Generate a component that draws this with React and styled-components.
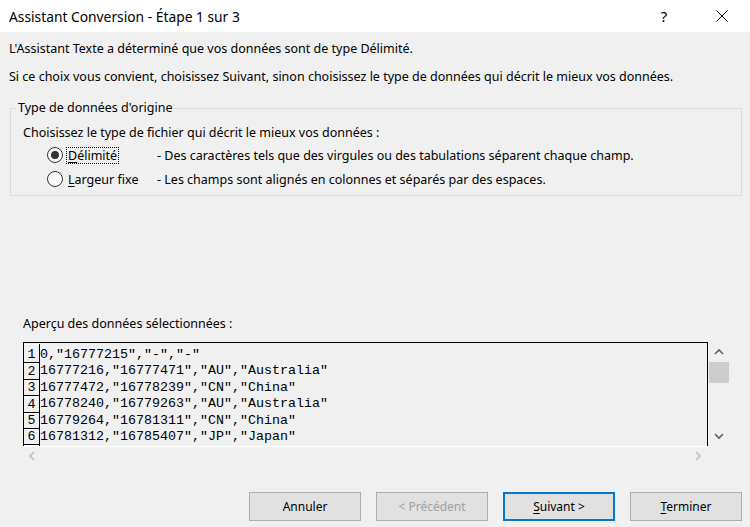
import React from "react";
import styled, { createGlobalStyle } from "styled-components";

const Global = createGlobalStyle`
  html, body { margin: 0; padding: 0; background: #f0f0f0; }
  body { font-family: "Noto Sans", "DejaVu Sans", sans-serif; font-size: 12.5px; color: #000; }
`;

const Window = styled.div`
  width: 750px;
  height: 527px;
  display: flex;
  flex-direction: column;
  background: #f0f0f0;
  overflow: hidden;
`;

const TitleBar = styled.div`
  height: 32px;
  flex: none;
  background: #fff;
  display: flex;
  align-items: center;
  padding-left: 9px;
`;

const Title = styled.div`
  flex: 1;
  font-size: 13.8px;
  color: #000;
`;

const TitleButton = styled.div`
  width: ${(p) => p.$w}px;
  height: 32px;
  display: flex;
  align-items: center;
  justify-content: center;
  font-size: 15px;
  color: #000;
`;

const Body = styled.div`
  flex: 1;
  display: flex;
  flex-direction: column;
  padding: 9px 8px 0 9px;
`;

const Para = styled.div`
  line-height: 16px;
  margin-top: ${(p) => p.$mt || 0}px;
`;

const Group = styled.fieldset`
  margin: 15px 0 0 1px;
  padding: 0 0 4px 5px;
  border: 1px solid #dcdcdc;
  min-width: 0;
`;

const Legend = styled.legend`
  padding: 0 2px;
  line-height: 16px;
`;

const GroupInner = styled.div`
  padding-left: 7px;
  display: flex;
  flex-direction: column;
`;

const Prompt = styled.div`
  line-height: 16px;
  margin-top: 9px;
  margin-bottom: 2px;
`;

const OptionRow = styled.div`
  display: grid;
  grid-template-columns: 20px 90px 1fr;
  align-items: center;
  height: 24px;
  padding-left: 24px;
`;

const Radio = styled.span`
  width: 14px;
  height: 14px;
  border: 1px solid #333;
  border-radius: 50%;
  background: #fff;
  display: flex;
  align-items: center;
  justify-content: center;
  box-sizing: content-box;
  &::after {
    content: "";
    width: 8px;
    height: 8px;
    border-radius: 50%;
    background: ${(p) => (p.$checked ? "#333" : "transparent")};
  }
`;

const OptionLabel = styled.span`
  justify-self: start;
  padding: 0 1px;
  line-height: 15px;
  outline: ${(p) => (p.$focus ? "1px dotted #000" : "none")};
  outline-offset: 0;
`;

const Key = styled.span`
  text-decoration: underline;
  text-underline-offset: 2px;
`;

const PreviewLabel = styled.div`
  margin: 120px 0 0 14px;
  line-height: 16px;
`;

const Preview = styled.div`
  margin: 10px 13px 0 14px;
  height: 122px;
  display: grid;
  grid-template-columns: 1fr 21px;
  grid-template-rows: 1fr 18px;
`;

const TextBox = styled.div`
  border: 1px solid #000;
  border-bottom: none;
  padding-top: 1px;
  overflow: hidden;
  display: grid;
  grid-template-columns: 16px 1fr;
`;

const NumCol = styled.div`
  border-right: 1px solid #000;
  display: flex;
  flex-direction: column;
`;

const NumCell = styled.div`
  height: ${(p) => (p.$first ? 19.4 : 16.4)}px;
  flex: none;
  box-sizing: border-box;
  border-bottom: 1px solid #000;
  border-top: 1px solid #fff;
  font-family: "Liberation Mono", "Courier New", monospace;
  font-size: 13.33px;
  line-height: 14px;
  display: flex;
  align-items: flex-end;
  justify-content: center;
`;

const Lines = styled.div`
  display: flex;
  flex-direction: column;
  padding-top: 3px;
`;

const Line = styled.div`
  height: 16.4px;
  flex: none;
  font-family: "Liberation Mono", "Courier New", monospace;
  font-size: 13.33px;
  line-height: 16px;
  white-space: pre;
`;

const VScroll = styled.div`
  display: flex;
  flex-direction: column;
  align-items: stretch;
  padding-left: 1px;
`;

const Arrow = styled.div`
  height: ${(p) => p.$h}px;
  display: flex;
  align-items: center;
  justify-content: center;
  flex: none;
`;

const Thumb = styled.div`
  height: 21px;
  background: #cdcdcd;
  flex: none;
`;

const Track = styled.div`
  flex: 1;
`;

const HScroll = styled.div`
  border-top: 1px solid #fff;
  display: flex;
  justify-content: space-between;
  align-items: center;
  padding: 0 6px 0 5px;
`;

const Buttons = styled.div`
  margin-top: 28px;
  display: flex;
  justify-content: flex-end;
  gap: 15px;
`;

const Button = styled.div`
  width: 112px;
  height: 29px;
  box-sizing: border-box;
  background: #e1e1e1;
  font-size: 12px;
  border: ${(p) => (p.$default ? "2px solid #0078d7" : "1px solid #adadad")};
  color: ${(p) => (p.$disabled ? "#a0a0a0" : "#000")};
  display: flex;
  align-items: center;
  justify-content: center;
`;

const Chevron = ({ dir, color }) => {
  const paths = {
    up: "M1 6 L5 2 L9 6",
    down: "M1 2 L5 6 L9 2",
    left: "M6 1 L2 5 L6 9",
    right: "M2 1 L6 5 L2 9",
  };
  const vertical = dir === "up" || dir === "down";
  return (
    <svg width={vertical ? 10 : 8} height={vertical ? 8 : 10} viewBox={vertical ? "0 0 10 8" : "0 0 8 10"}>
      <path d={paths[dir]} fill="none" stroke={color} strokeWidth="1.6" />
    </svg>
  );
};

const rows = [
  '0,"16777215","-","-"',
  '16777216,"16777471","AU","Australia"',
  '16777472,"16778239","CN","China"',
  '16778240,"16779263","AU","Australia"',
  '16779264,"16781311","CN","China"',
  '16781312,"16785407","JP","Japan"',
  "",
];

export default function App() {
  return (
    <Window>
      <Global />
      <TitleBar>
        <Title>Assistant Conversion - Étape 1 sur 3</Title>
        <TitleButton $w={70}>?</TitleButton>
        <TitleButton $w={46}>
          <svg width="12" height="12" viewBox="0 0 12 12">
            <path d="M0.5 0.5 L11.5 11.5 M11.5 0.5 L0.5 11.5" stroke="#000" strokeWidth="1" />
          </svg>
        </TitleButton>
        <TitleButton $w={5} />
      </TitleBar>
      <Body>
        <Para>L'Assistant Texte a déterminé que vos données sont de type Délimité.</Para>
        <Para $mt={12}>
          Si ce choix vous convient, choisissez Suivant, sinon choisissez le type de données qui décrit le mieux vos données.
        </Para>
        <Group>
          <Legend>Type de données d'origine</Legend>
          <GroupInner>
            <Prompt>Choisissez le type de fichier qui décrit le mieux vos données :</Prompt>
            <OptionRow>
              <Radio $checked />
              <OptionLabel $focus>
                <Key>D</Key>élimité
              </OptionLabel>
              <span>- Des caractères tels que des virgules ou des tabulations séparent chaque champ.</span>
            </OptionRow>
            <OptionRow>
              <Radio />
              <OptionLabel>
                <Key>L</Key>argeur fixe
              </OptionLabel>
              <span>- Les champs sont alignés en colonnes et séparés par des espaces.</span>
            </OptionRow>
          </GroupInner>
        </Group>
        <PreviewLabel>Aperçu des données sélectionnées :</PreviewLabel>
        <Preview>
          <TextBox>
            <NumCol>
              {rows.map((_, i) => (
                <NumCell key={i} $first={i === 0}>
                  {i < 6 ? i + 1 : ""}
                </NumCell>
              ))}
            </NumCol>
            <Lines>
              {rows.map((r, i) => (
                <Line key={i}>{r}</Line>
              ))}
            </Lines>
          </TextBox>
          <VScroll>
            <Arrow $h={20}>
              <Chevron dir="up" color="#606060" />
            </Arrow>
            <Thumb />
            <Track />
            <Arrow $h={20}>
              <Chevron dir="down" color="#606060" />
            </Arrow>
          </VScroll>
          <HScroll>
            <Chevron dir="left" color="#c0c0c0" />
            <Chevron dir="right" color="#c0c0c0" />
          </HScroll>
          <div />
        </Preview>
        <Buttons>
          <Button>Annuler</Button>
          <Button $disabled>&lt; Précédent</Button>
          <Button $default>
            <span>
              <Key>S</Key>uivant &gt;
            </span>
          </Button>
          <Button>
            <span>
              <Key>T</Key>erminer
            </span>
          </Button>
        </Buttons>
      </Body>
    </Window>
  );
}
